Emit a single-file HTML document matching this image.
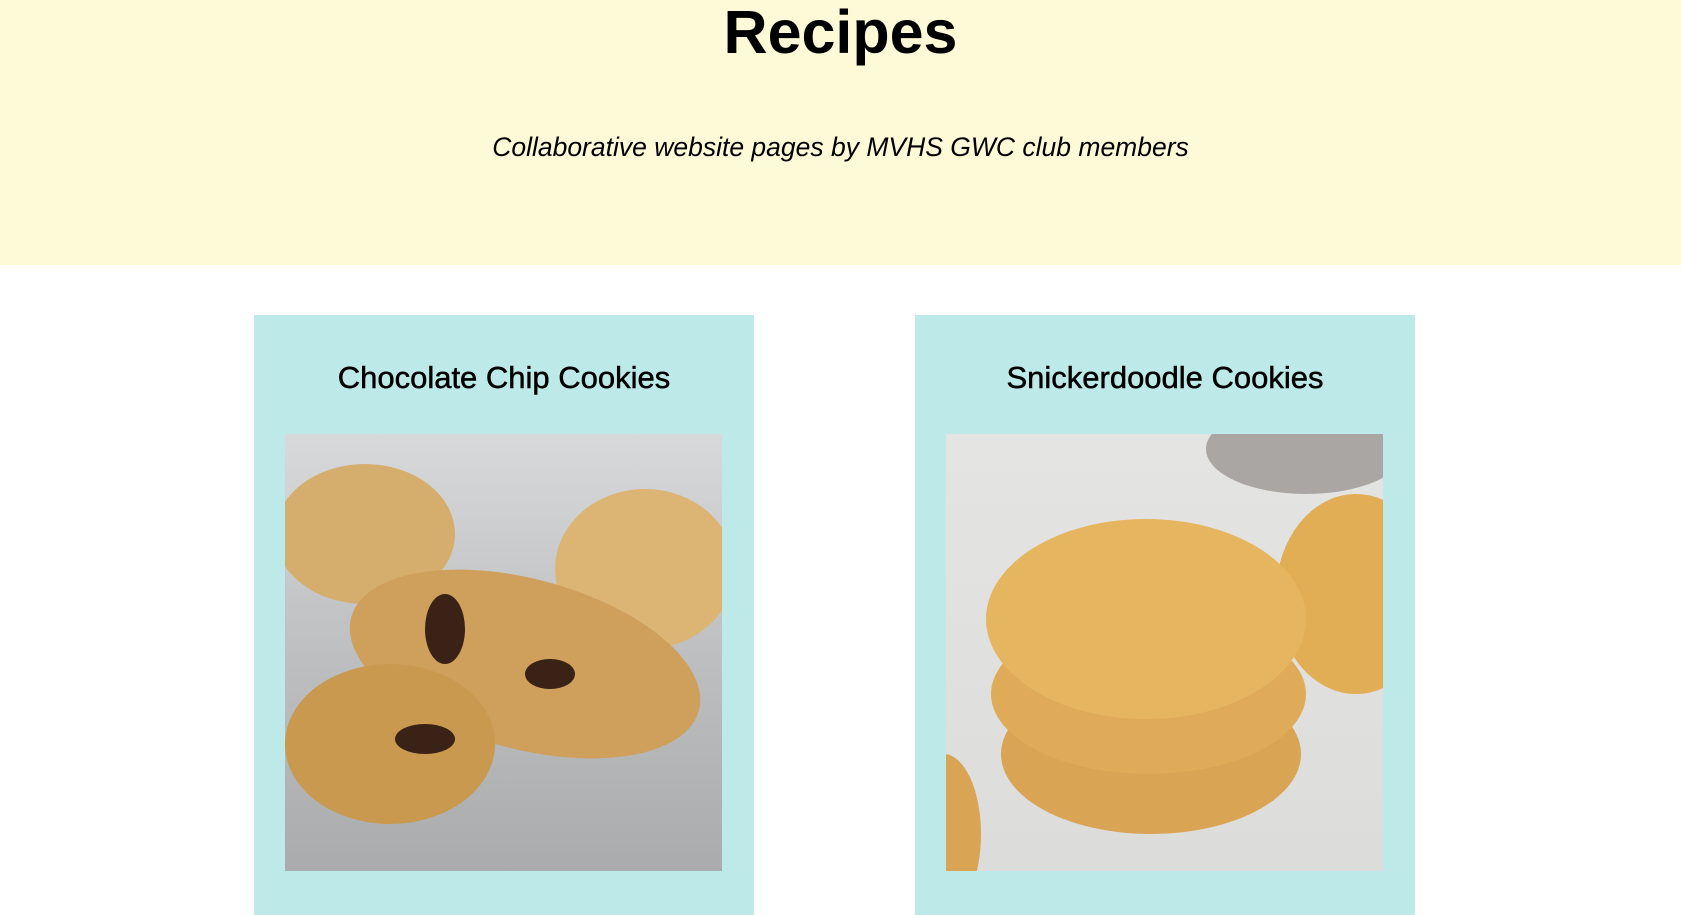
<!DOCTYPE html>
<html><head><meta charset="utf-8"><style>
html,body{margin:0;padding:0;width:1681px;height:900px;overflow:hidden;background:#fff;font-family:"Liberation Sans",sans-serif;}
.hdr{position:absolute;left:0;top:0;width:1681px;height:265px;background:#fef9d6;}
h1{position:absolute;left:0;width:1681px;top:-3px;margin:0;text-align:center;font-size:61px;font-weight:bold;color:#000;}
.sub{position:absolute;left:0;width:1681px;top:132px;text-align:center;font-size:26.5px;font-style:italic;}
.card{position:absolute;top:315px;width:500px;height:600px;background:#bdeae8;}
.card h2{position:absolute;left:0;width:500px;top:45px;margin:0;text-align:center;font-size:31px;font-weight:normal;-webkit-text-stroke:0.5px #000;}
.img{position:absolute;left:31px;top:119px;width:437px;height:437px;overflow:hidden;}
.ck{position:absolute;border-radius:50%;}
</style></head><body>
<div class="hdr"></div>
<h1>Recipes</h1>
<div class="sub">Collaborative website pages by MVHS GWC club members</div>
<div class="card" style="left:254px">
<h2>Chocolate Chip Cookies</h2>
<div class="img" style="background:linear-gradient(180deg,#d7d9da,#bdbfc1 50%,#a9abad)">
<div class="ck" style="left:-10px;top:30px;width:180px;height:140px;background:#d5ad6c"></div>
<div class="ck" style="left:270px;top:55px;width:180px;height:160px;background:#dcb575"></div>
<div class="ck" style="left:60px;top:145px;width:360px;height:170px;background:#cfa05c;transform:rotate(15deg)"></div>
<div class="ck" style="left:0;top:230px;width:210px;height:160px;background:#c9994f"></div>
<div class="ck" style="left:140px;top:160px;width:40px;height:70px;background:#3a2216"></div>
<div class="ck" style="left:240px;top:225px;width:50px;height:30px;background:#3a2216"></div>
<div class="ck" style="left:110px;top:290px;width:60px;height:30px;background:#3a2216"></div>
</div>
</div>
<div class="card" style="left:915px">
<h2>Snickerdoodle Cookies</h2>
<div class="img" style="background:linear-gradient(180deg,#e4e4e2,#dcdcda)">
<div class="ck" style="left:260px;top:-30px;width:200px;height:90px;background:#a9a6a4"></div>
<div class="ck" style="left:330px;top:60px;width:160px;height:200px;background:#e2ae55"></div>
<div class="ck" style="left:55px;top:240px;width:300px;height:160px;background:#d9a454"></div>
<div class="ck" style="left:45px;top:180px;width:315px;height:160px;background:#dfab58"></div>
<div class="ck" style="left:40px;top:85px;width:320px;height:200px;background:#e6b560"></div>
<div class="ck" style="left:-40px;top:320px;width:75px;height:160px;background:#d9a454"></div>
</div>
</div>
</body></html>
